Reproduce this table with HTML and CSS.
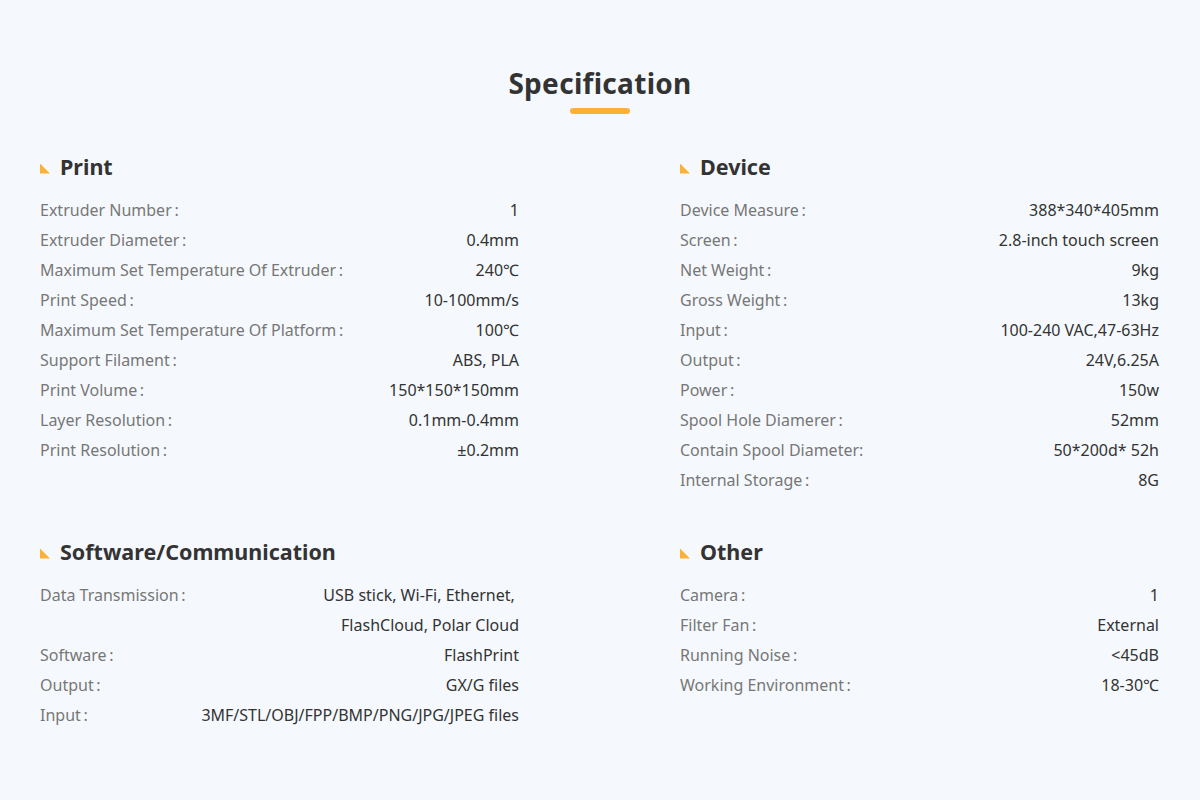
FILE: index.html
```html
<!DOCTYPE html>
<html lang="en">
<head>
<meta charset="utf-8">
<title>Specification</title>
<link rel="stylesheet" href="styles.css">
</head>
<body>
<main class="spec">
  <h1 class="spec-title">Specification</h1>
  <div class="spec-bar"></div>
  <div class="spec-grid">
    <section class="group">
      <h2 class="group-title"><span class="tri"></span>Print</h2>
      <ul class="rows">
        <li class="row"><span class="label">Extruder Number&#8201;:</span><span class="value">1</span></li>
        <li class="row"><span class="label">Extruder Diameter&#8201;:</span><span class="value">0.4mm</span></li>
        <li class="row"><span class="label">Maximum Set Temperature Of Extruder&#8201;:</span><span class="value">240℃</span></li>
        <li class="row"><span class="label">Print Speed&#8201;:</span><span class="value">10-100mm/s</span></li>
        <li class="row"><span class="label">Maximum Set Temperature Of Platform&#8201;:</span><span class="value">100℃</span></li>
        <li class="row"><span class="label">Support Filament&#8201;:</span><span class="value">ABS, PLA</span></li>
        <li class="row"><span class="label">Print Volume&#8201;:</span><span class="value">150*150*150mm</span></li>
        <li class="row"><span class="label">Layer Resolution&#8201;:</span><span class="value">0.1mm-0.4mm</span></li>
        <li class="row"><span class="label">Print Resolution&#8201;:</span><span class="value">±0.2mm</span></li>
      </ul>
    </section>
    <section class="group">
      <h2 class="group-title"><span class="tri"></span>Device</h2>
      <ul class="rows">
        <li class="row"><span class="label">Device Measure&#8201;:</span><span class="value">388*340*405mm</span></li>
        <li class="row"><span class="label">Screen&#8201;:</span><span class="value">2.8-inch touch screen</span></li>
        <li class="row"><span class="label">Net Weight&#8201;:</span><span class="value">9kg</span></li>
        <li class="row"><span class="label">Gross Weight&#8201;:</span><span class="value">13kg</span></li>
        <li class="row"><span class="label">Input&#8201;:</span><span class="value">100-240 VAC,47-63Hz</span></li>
        <li class="row"><span class="label">Output&#8201;:</span><span class="value">24V,6.25A</span></li>
        <li class="row"><span class="label">Power&#8201;:</span><span class="value">150w</span></li>
        <li class="row"><span class="label">Spool Hole Diamerer&#8201;:</span><span class="value">52mm</span></li>
        <li class="row"><span class="label">Contain Spool Diameter:</span><span class="value">50*200d* 52h</span></li>
        <li class="row"><span class="label">Internal Storage&#8201;:</span><span class="value">8G</span></li>
      </ul>
    </section>
    <section class="group">
      <h2 class="group-title"><span class="tri"></span>Software/Communication</h2>
      <ul class="rows">
        <li class="row"><span class="label">Data Transmission&#8201;:</span><span class="value">USB stick, Wi-Fi, Ethernet,&nbsp;<br>FlashCloud, Polar Cloud</span></li>
        <li class="row"><span class="label">Software&#8201;:</span><span class="value">FlashPrint</span></li>
        <li class="row"><span class="label">Output&#8201;:</span><span class="value">GX/G files</span></li>
        <li class="row"><span class="label">Input&#8201;:</span><span class="value">3MF/STL/OBJ/FPP/BMP/PNG/JPG/JPEG files</span></li>
      </ul>
    </section>
    <section class="group">
      <h2 class="group-title"><span class="tri"></span>Other</h2>
      <ul class="rows">
        <li class="row"><span class="label">Camera&#8201;:</span><span class="value">1</span></li>
        <li class="row"><span class="label">Filter Fan&#8201;:</span><span class="value">External</span></li>
        <li class="row"><span class="label">Running Noise&#8201;:</span><span class="value">&lt;45dB</span></li>
        <li class="row"><span class="label">Working Environment&#8201;:</span><span class="value">18-30℃</span></li>
      </ul>
    </section>
  </div>
</main>
</body>
</html>
```

FILE: styles.css
```css
* { box-sizing: border-box; }
html, body {
  margin: 0;
  padding: 0;
  background: #f5f9fd;
}
body {
  font-family: "Noto Sans", "Noto Sans CJK SC", sans-serif;
  color: #333333;
  width: 1200px;
  height: 800px;
  overflow: hidden;
}
.spec {
  padding: 63px 40px 0;
  display: flex;
  flex-direction: column;
  align-items: center;
}
.spec-title {
  margin: 0;
  font-size: 28px;
  line-height: 40px;
  font-weight: 700;
  color: #333333;
  letter-spacing: 0.3px;
}
.spec-bar {
  margin-top: 5px;
  width: 60px;
  height: 6px;
  border-radius: 3px;
  background: #fbb135;
}
.spec-grid {
  margin-top: 38px;
  width: 100%;
  display: grid;
  grid-template-columns: 480px 480px;
  column-gap: 160px;
  row-gap: 42px;
}
.group-title {
  margin: 0 0 13px;
  display: flex;
  align-items: center;
  font-size: 21.5px;
  line-height: 30px;
  font-weight: 700;
  color: #333333;
}
.tri {
  width: 10px;
  height: 10px;
  margin: 3px 10px 0 0;
  background: #fbb135;
  clip-path: polygon(0 0, 0 100%, 100% 100%);
}
.rows {
  list-style: none;
  margin: 0;
  padding: 0;
}
.row {
  display: flex;
  justify-content: space-between;
  align-items: flex-start;
  font-size: 16px;
  line-height: 30px;
}
.label {
  color: #777777;
  white-space: nowrap;
}
.value {
  color: #333333;
  text-align: right;
  white-space: nowrap;
  margin-right: 1px;
}
```
